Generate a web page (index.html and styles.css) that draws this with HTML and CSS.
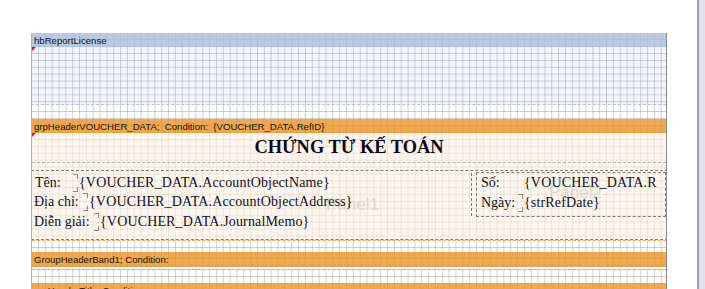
FILE: index.html
```html
<!DOCTYPE html>
<html>
<head>
<meta charset="utf-8">
<link rel="stylesheet" href="styles.css">
</head>
<body>
<div class="screen">
  <div class="canvas">
    <div class="report">
      <div class="band blue"><span class="band-text">hbReportLicense</span></div>
      <div class="area lightblue"><span class="corner"></span></div>
      <div class="area white h14"></div>
      <div class="band orange h14"><span class="band-text">grpHeaderVOUCHER_DATA;  Condition:  {VOUCHER_DATA.RefID}</span></div>
      <div class="detail">
        <span class="corner"></span>
        <div class="title">CHỨNG TỪ KẾ TOÁN</div>
        <div class="panel1">
          <span class="watermark wm1">Panel1</span>
          <div class="fields">
            <div class="row"><span class="label l1">Tên:</span><span class="value">{VOUCHER_DATA.AccountObjectName}</span></div>
            <div class="row"><span class="label l2">Địa chỉ:</span><span class="value">{VOUCHER_DATA.AccountObjectAddress}</span></div>
            <div class="row"><span class="label l3">Diễn giải:</span><span class="value">{VOUCHER_DATA.JournalMemo}</span></div>
          </div>
          <div class="sep"></div>
          <div class="panel2">
            <span class="watermark wm2">Panel2</span>
            <div class="row r2"><span class="label l4">Số:</span><span class="value clip">{VOUCHER_DATA.RefNo}</span></div>
            <div class="row r2"><span class="label l4">Ngày:</span><span class="value">{strRefDate}</span></div>
          </div>
        </div>
      </div>
      <div class="area white h11"></div>
      <div class="band orange h15"><span class="band-text">GroupHeaderBand1; Condition:</span></div>
      <div class="area white h14 dash-top"></div>
      <div class="band orange h14"><span class="band-text">grpHeaderTitle; Condition:</span></div>
    </div>
  </div>
  <div class="scrollbar"></div>
</div>
</body>
</html>
```

FILE: styles.css
```css
html, body {
  margin: 0;
  padding: 0;
  background: #ffffff;
}

.screen {
  display: flex;
  width: 705px;
  height: 289px;
  overflow: hidden;
}

.canvas {
  flex: 1;
  padding: 33px 0 0 31px;
  overflow: hidden;
}

.report {
  width: 634px;
  border-left: 1px solid #b4b4b4;
  border-right: 1px solid #8a8a8a;
  height: 260px;
  overflow: hidden;
}

.scrollbar {
  width: 6px;
  border-left: 2px solid #9fa2a6;
  background: #e0e3e7;
}

/* grid */
.band, .area, .detail {
  --gc: rgba(120, 125, 135, 0.35);
  background-image:
    linear-gradient(to right, var(--gc) 1px, transparent 1px),
    linear-gradient(to bottom, var(--gc) 1px, transparent 1px);
  background-size: 6.85px 6.9px;
  background-position: 6px 6px;
  position: relative;
  box-sizing: border-box;
}

.band {
  display: flex;
  align-items: center;
  font-family: "Liberation Sans", Arial, sans-serif;
  font-size: 9.6px;
  color: #151515;
  padding-left: 2px;
  white-space: pre;
}

.blue {
  height: 14px;
  background-color: #b9cbe3;
  --gc: rgba(160, 175, 200, 0.35);
}

.orange {
  background-color: #efa84d;
  --gc: rgba(200, 130, 50, 0.22);
}

.h14 { height: 14px; }
.h15 { height: 15px; }
.h11 { height: 11px; }

.lightblue {
  height: 58px;
  background-color: #f2f5fa;
  --gc: rgba(150, 155, 165, 0.45);
  border-bottom: 1px dashed #b5c3d6;
  border-left: 1px dotted #555;
  margin-left: -1px;
}

.white {
  background-color: #ffffff;
  --gc: rgba(150, 150, 150, 0.45);
}

.dash-top {
  border-top: 1px dashed #efa84d;
  margin-top: 2px;
}

.corner {
  position: absolute;
  left: 0;
  top: 0;
  width: 0;
  height: 0;
  border-top: 4px solid #e8121b;
  border-right: 4px solid transparent;
}

.detail {
  height: 108px;
  background-color: #fdf6ee;
  --gc: rgba(200, 185, 170, 0.28);
  border-bottom: 1px dashed #efa84d;
}

.title {
  height: 30px;
  box-sizing: border-box;
  border-bottom: 1px dashed #b8b0a8;
  text-align: center;
  font-family: "Liberation Serif", "Times New Roman", serif;
  font-weight: bold;
  font-size: 18.4px;
  line-height: 28px;
  color: #0a0a1a;
}

.panel1 {
  position: relative;
  margin-top: 7px;
  margin-left: -1px;
  width: 637px;
  height: 70px;
  box-sizing: border-box;
  border: 1px dashed #7d7d7d;
  display: flex;
  align-items: flex-start;
  padding-top: 1px;
}

.watermark {
  position: absolute;
  font-family: "Liberation Sans", Arial, sans-serif;
  font-size: 17px;
  color: #ddd6cf;
  z-index: 0;
}

.wm1 { left: 294px; top: 24px; }
.wm2 { left: 72px; top: 10px; }

.fields {
  width: 439px;
  position: relative;
  z-index: 1;
  padding-top: 1px;
}

.row {
  display: flex;
  height: 19.6px;
  align-items: center;
  font-family: "Liberation Serif", "Times New Roman", serif;
  font-size: 14px;
  color: #111122;
  white-space: nowrap;
  position: relative;
  z-index: 1;
}

.r2 { height: 20px; }

.label { flex: none; padding-left: 2px; box-sizing: border-box; }
.l1 { width: 47px; padding-left: 3px; }
.l2 { width: 57px; }
.l3 { width: 68px; }
.l4 { width: 47px; padding-left: 4px; }

.value {
  letter-spacing: 0.15px;
  position: relative;
}

.value::before {
  content: "";
  position: absolute;
  left: -6px;
  top: -1px;
  width: 4px;
  height: 4px;
  border-top: 1px solid #8a8a8a;
  border-right: 1px solid #8a8a8a;
}

.value::after {
  content: "";
  position: absolute;
  left: -6px;
  bottom: -1px;
  width: 4px;
  height: 4px;
  border-bottom: 1px solid #8a8a8a;
  border-right: 1px solid #8a8a8a;
}

.clip {
  width: 133px;
  overflow: hidden;
}

.clip::before, .clip::after { display: none; }

.sep {
  width: 0;
  height: 43px;
  margin-top: 1px;
  border-left: 1px dashed #7d7d7d;
}

.panel2 {
  position: relative;
  margin-left: 4px;
  margin-top: 0;
  width: 190px;
  height: 45px;
  box-sizing: border-box;
  border: 1px dashed #7d7d7d;
  padding-top: 0;
  overflow: hidden;
}
```
